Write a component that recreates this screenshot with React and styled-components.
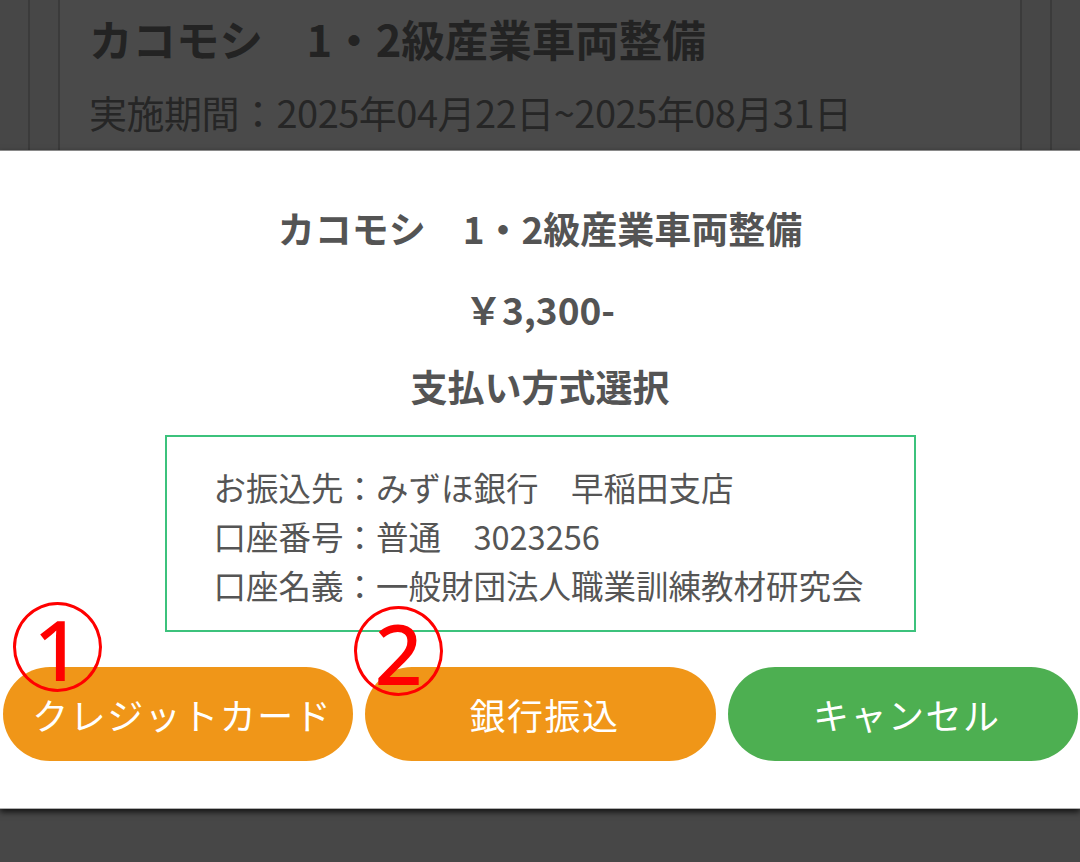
import React from 'react';
import styled, { createGlobalStyle } from 'styled-components';

const GlobalStyle = createGlobalStyle`
  html, body {
    margin: 0;
    padding: 0;
    background: #474747;
  }
  body {
    font-family: "Noto Sans CJK JP", "Noto Sans", sans-serif;
  }
  * {
    box-sizing: border-box;
  }
`;

const Screen = styled.div`
  position: relative;
  width: 1080px;
  height: 862px;
  overflow: hidden;
  background: #474747;
`;

// page behind the dimmed overlay
const PageFrame = styled.div`
  height: 400px;
  padding: 0 28px;
`;

const OuterColumn = styled.div`
  height: 100%;
  border-left: 2px solid #3b3b3b;
  border-right: 2px solid #3b3b3b;
  padding: 0 28px;
`;

const InnerCard = styled.div`
  height: 100%;
  border-left: 2px solid #3b3b3b;
  border-right: 2px solid #3b3b3b;
  padding: 8px 29px 0;
  background: #4a4a4a;
`;

const CourseTitle = styled.h2`
  margin: 0;
  font-size: 43.5px;
  line-height: 62px;
  font-weight: 700;
  color: #232323;
`;

const CoursePeriod = styled.p`
  margin: 16px 0 0;
  font-size: 38px;
  line-height: 52px;
  font-weight: 400;
  color: #262626;
  letter-spacing: -0.5px;
`;

const Modal = styled.div`
  position: absolute;
  left: 0;
  right: 0;
  top: 150px;
  height: 659px;
  background: #fff;
  border-top: 1px solid #8a8a8a;
  border-bottom: 1px solid #b0b0b0;
  box-shadow: 0 3px 6px rgba(0, 0, 0, 0.75);
  display: flex;
  flex-direction: column;
  align-items: center;
  padding-top: 51px;
`;

const Heading = styled.div`
  font-size: 37px;
  line-height: 52px;
  font-weight: 700;
  color: #545454;
  margin-top: ${(p) => p.$gap || 0}px;
`;

const AccountBox = styled.div`
  width: 751px;
  margin-top: 23px;
  border: 2px solid #3cc27c;
  padding: 25px 0 21px 47px;
`;

const AccountLine = styled.div`
  font-size: 32.5px;
  line-height: 49px;
  color: #555;
  white-space: pre;
`;

const ButtonRow = styled.div`
  align-self: stretch;
  display: flex;
  gap: 12px;
  padding: 0 2px 0 3px;
  margin-top: 35px;
`;

const PillButton = styled.button`
  flex: 1;
  height: 94px;
  border: none;
  border-radius: 47px;
  background: ${(p) => (p.$variant === 'cancel' ? '#4daf51' : '#f09618')};
  color: #fff;
  font-family: "Noto Sans CJK JP", "Noto Sans", sans-serif;
  font-size: 36px;
  font-weight: 400;
  letter-spacing: 1.5px;
  padding: 0 0 0 8px;
  cursor: pointer;
`;

// red circled numbers drawn over the screenshot
const Marker = styled.div`
  position: absolute;
  left: ${(p) => p.$x}px;
  top: ${(p) => p.$y}px;
  width: 89px;
  height: 90px;
  border: 3.5px solid #ff0000;
  border-radius: 50%;
  display: flex;
  align-items: center;
  justify-content: center;
  color: #ff0000;
  font-family: "Noto Sans", "Liberation Sans", sans-serif;
  font-size: 84px;
  font-weight: 500;
  line-height: 1;
  padding-top: 4px;
`;

const accountLines = [
  'お振込先：みずほ銀行　早稲田支店',
  '口座番号：普通　3023256',
  '口座名義：一般財団法人職業訓練教材研究会',
];

export default function App() {
  return (
    <>
      <GlobalStyle />
      <Screen>
        <PageFrame>
          <OuterColumn>
            <InnerCard>
              <CourseTitle>カコモシ　1・2級産業車両整備</CourseTitle>
              <CoursePeriod>実施期間：2025年04月22日~2025年08月31日</CoursePeriod>
            </InnerCard>
          </OuterColumn>
        </PageFrame>

        <Modal>
          <Heading>カコモシ　1・2級産業車両整備</Heading>
          <Heading $gap={29}>￥3,300-</Heading>
          <Heading $gap={25}>支払い方式選択</Heading>
          <AccountBox>
            {accountLines.map((line) => (
              <AccountLine key={line}>{line}</AccountLine>
            ))}
          </AccountBox>
          <ButtonRow>
            <PillButton>クレジットカード</PillButton>
            <PillButton>銀行振込</PillButton>
            <PillButton $variant="cancel">キャンセル</PillButton>
          </ButtonRow>
          <Marker $x={13} $y={451}>1</Marker>
          <Marker $x={354} $y={455}>2</Marker>
        </Modal>
      </Screen>
    </>
  );
}
